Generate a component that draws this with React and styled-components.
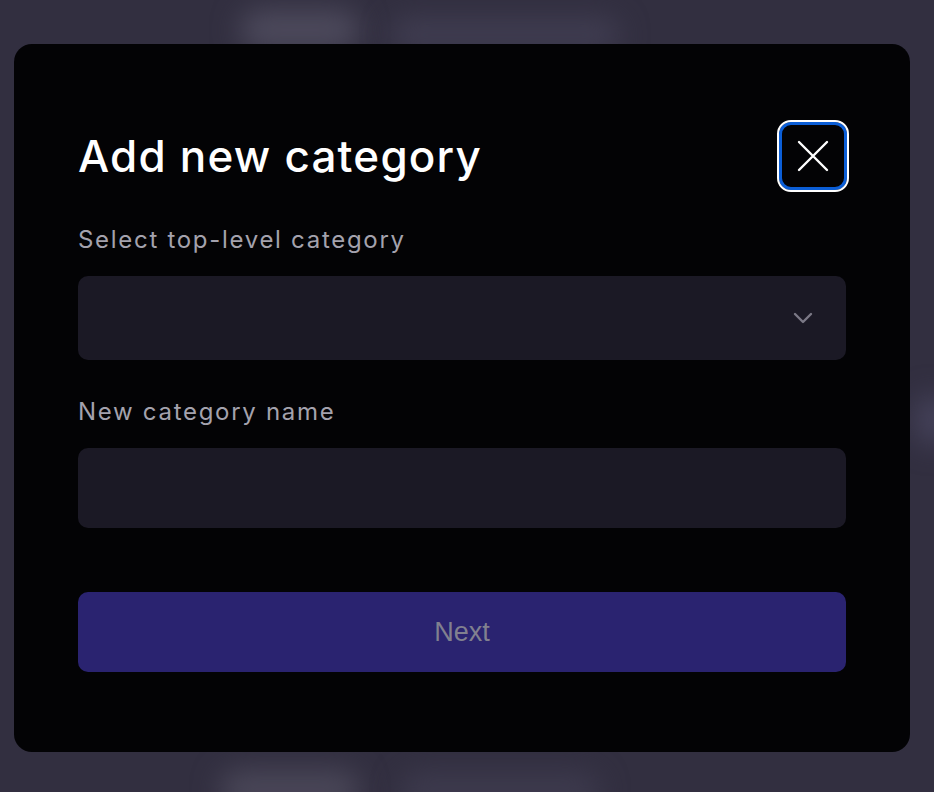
import React, { useState } from "react";
import styled, { createGlobalStyle } from "styled-components";

const GlobalStyle = createGlobalStyle`
  * { box-sizing: border-box; }
  body {
    margin: 0;
    background: #322f40;
    font-family: Inter, "Noto Sans", sans-serif;
  }
`;

const Page = styled.div`
  position: relative;
  width: 934px;
  height: 792px;
  overflow: hidden;
  padding: 44px 24px 40px 14px;
`;

const Blob = styled.div`
  position: absolute;
  border-radius: 20px;
  background: ${(p) => p.$color || "#4a4759"};
  filter: blur(14px);
`;

const Modal = styled.div`
  position: relative;
  width: 896px;
  height: 708px;
  background: #030305;
  border-radius: 18px;
  padding: 76px 64px 80px;
  display: flex;
  flex-direction: column;
`;

const Header = styled.div`
  display: flex;
  align-items: center;
  justify-content: space-between;
  height: 72px;
  margin-right: -3px;
`;

const Title = styled.h1`
  margin: 0;
  color: #ffffff;
  font-size: 44px;
  font-weight: 500;
  letter-spacing: 1.2px;
`;

const CloseButton = styled.button`
  width: 72px;
  height: 72px;
  border-radius: 14px;
  border: 2px solid #ffffff;
  background: #030305;
  box-shadow: inset 0 0 0 3px #0b5ed7;
  display: flex;
  align-items: center;
  justify-content: center;
  padding: 0;
  cursor: pointer;
`;

const Label = styled.label`
  display: block;
  color: #a4a2ad;
  font-size: 24px;
  line-height: 32px;
  letter-spacing: 1.7px;
  margin-top: ${(p) => p.$top}px;
  margin-bottom: 20px;
`;

const Field = styled.div`
  position: relative;
  height: ${(p) => p.$h}px;
  background: #1b1925;
  border-radius: 10px;
  display: flex;
  align-items: center;
  justify-content: flex-end;
  padding-right: 33px;
`;

const Input = styled.input`
  position: absolute;
  inset: 0;
  width: 100%;
  background: transparent;
  border: 0;
  outline: none;
  color: #ffffff;
  font-size: 22px;
  padding: 0 24px;
  font-family: inherit;
`;

const NextButton = styled.button`
  margin-top: 64px;
  height: 80px;
  border: 0;
  border-radius: 10px;
  background: #2a2370;
  color: #81808f;
  font-family: "Liberation Sans", Arial, sans-serif;
  font-size: 27px;
  cursor: not-allowed;
`;

export default function App() {
  const [name, setName] = useState("");

  return (
    <Page>
      <GlobalStyle />
      <Blob style={{ left: 240, top: 10, width: 120, height: 40 }} $color="#4d4a5c" />
      <Blob style={{ left: 390, top: 18, width: 230, height: 34 }} $color="#403d51" />
      <Blob style={{ left: 220, top: 770, width: 140, height: 40 }} $color="#4a4758" />
      <Blob style={{ left: 400, top: 772, width: 200, height: 40 }} $color="#3d3a4d" />
      <Blob style={{ left: 914, top: 395, width: 40, height: 50 }} $color="#45425a" />
      <Modal>
        <Header>
          <Title>Add new category</Title>
          <CloseButton aria-label="Close">
            <svg width="32" height="32" viewBox="0 0 32 32" fill="none">
              <path d="M2 2L30 30M30 2L2 30" stroke="#ffffff" strokeWidth="2.4" strokeLinecap="round" />
            </svg>
          </CloseButton>
        </Header>

        <Label $top={32}>Select top-level category</Label>
        <Field $h={84}>
          <svg width="20" height="12" viewBox="0 0 20 12" fill="none">
            <path d="M2 2L10 10L18 2" stroke="#7b7986" strokeWidth="2.4" strokeLinecap="round" strokeLinejoin="round" />
          </svg>
        </Field>

        <Label $top={36}>New category name</Label>
        <Field $h={80}>
          <Input value={name} onChange={(e) => setName(e.target.value)} />
        </Field>

        <NextButton disabled>Next</NextButton>
      </Modal>
    </Page>
  );
}
